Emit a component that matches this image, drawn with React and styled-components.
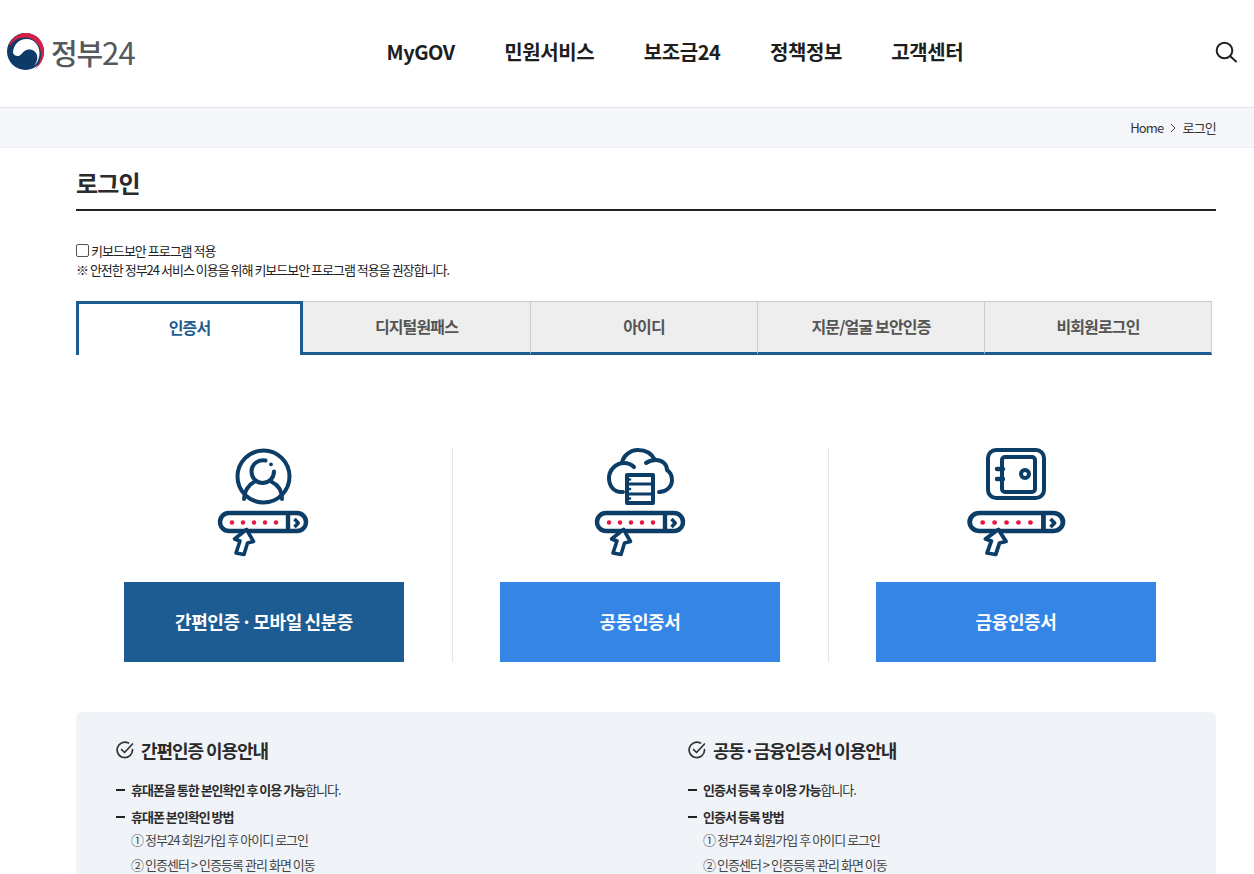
import React from "react";
import styled, { createGlobalStyle } from "styled-components";

const Global = createGlobalStyle`
  html, body { margin: 0; padding: 0; height: 874px; overflow: hidden; background: #fff; }
  body { font-family: "Noto Sans CJK KR", "Noto Sans", sans-serif; color: #222; }
  * { box-sizing: border-box; }
`;

const Header = styled.header`
  height: 108px;
  border-bottom: 1px solid #e3e5ea;
  display: grid;
  grid-template-columns: 340px 1fr 60px;
  align-items: center;
  padding: 0 17px 4px 7px;
`;
const Logo = styled.a`
  display: flex;
  align-items: center;
  gap: 7px;
  height: 37px;
`;
const LogoText = styled.span`
  font-size: 29px;
  font-weight: 500;
  color: #55585c;
  letter-spacing: -1.2px;
  line-height: 36px;
`;
const LogoDigits = styled.span`
  font-size: 31px;
  font-weight: 400;
  letter-spacing: -0.6px;
`;
const Nav = styled.nav`
  display: flex;
  gap: 49.5px;
  margin-left: 39.5px;
`;
const NavItem = styled.a`
  font-size: 20px;
  font-weight: 700;
  color: #1e1e1e;
  letter-spacing: -0.42px;
  line-height: 30px;
`;
const SearchBtn = styled.div`
  justify-self: end;
  width: 22px;
  height: 22px;
`;
const Crumbs = styled.div`
  height: 40px;
  background: #f4f6fa;
  border-bottom: 1px solid #eceef2;
  display: flex;
  align-items: center;
  justify-content: flex-end;
  gap: 5.5px;
  padding-right: 38px;
  font-size: 13px;
  letter-spacing: -0.8px;
  color: #333;
`;
const Main = styled.main`
  width: 1140px;
  margin-left: 76px;
`;
const Title = styled.h1`
  margin: 0;
  border-bottom: 2px solid #222;
  font-size: 24px;
  font-weight: 700;
  color: #2b2b2b;
  line-height: 35px;
  padding-top: 17px;
  letter-spacing: -0.8px;
  box-sizing: content-box;
  height: 44px;
`;
const Security = styled.div`
  margin-top: 30px;
  font-size: 13px;
  letter-spacing: -1px;
  line-height: 19px;
  color: #222;
`;
const CheckRow = styled.label`
  display: flex;
  align-items: center;
  gap: 2px;
`;
const Check = styled.input`
  width: 13px;
  height: 13px;
  margin: 0;
  appearance: none;
  border: 1px solid #555;
  border-radius: 2px;
  background: #fff;
`;
const Tabs = styled.div`
  margin-top: 22px;
  display: grid;
  grid-template-columns: 227px 228px repeat(3, 227px);
  height: 54px;
`;
const Tab = styled.div`
  display: flex;
  align-items: center;
  justify-content: center;
  font-size: 16px;
  font-weight: 700;
  letter-spacing: -0.85px;
  padding-bottom: ${p => (p.$active ? "5px" : "2px")};
  color: ${p => (p.$active ? "#1d5c92" : "#555")};
  background: ${p => (p.$active ? "#fff" : "#eee")};
  border: ${p => (p.$active ? "3px solid #1d5c92" : "1px solid #ccc")};
  border-bottom: ${p => (p.$active ? "0" : "3px solid #1d5c92")};
  border-left-width: ${p => (p.$active ? "3px" : "0")};
`;
const Methods = styled.div`
  margin-top: 93px;
  display: grid;
  grid-template-columns: repeat(3, 376px);
`;
const Method = styled.div`
  height: 214px;
  display: flex;
  flex-direction: column;
  align-items: center;
  justify-content: space-between;
  border-left: ${p => (p.$divider ? "1px solid #e6e6e6" : "0")};
  padding-right: ${p => (p.$divider ? "1px" : "0")};
`;
const MethodIcon = styled.svg`
  width: 100px;
  height: 112px;
  display: block;
`;
const MethodButton = styled.a`
  width: 280px;
  height: 80px;
  display: flex;
  align-items: center;
  justify-content: center;
  padding-bottom: 2px;
  color: #fff;
  font-size: 18px;
  font-weight: 700;
  letter-spacing: -0.4px;
  word-spacing: -1px;
  white-space: pre;
  background: ${p => (p.$dark ? "#1d5c92" : "#3485e6")};
`;
const Dot = styled.span`
  word-spacing: ${p => p.$gap}px;
`;
const Info = styled.section`
  margin-top: 50px;
  background: #f0f4f9;
  border-radius: 6px;
  height: 300px;
  padding: 25px 40px;
  display: grid;
  grid-template-columns: 572px 1fr;
`;
const InfoTitle = styled.h2`
  margin: 0 0 17px;
  display: flex;
  align-items: center;
  gap: 7px;
  font-size: 18px;
  font-weight: 700;
  color: #2b2b2b;
  letter-spacing: -1.05px;
  line-height: 26px;
  white-space: pre;
`;
const InfoItem = styled.div`
  position: relative;
  padding-left: 15px;
  font-size: 13px;
  letter-spacing: -1px;
  line-height: 20px;
  margin-bottom: ${p => (p.$tight ? "0" : "7px")};
  color: #333;
  &::before {
    content: "";
    position: absolute;
    left: 0;
    top: 9px;
    width: 9px;
    height: 2px;
    background: #222;
  }
`;
const Strong = styled.strong`
  font-weight: 700;
  color: #2b2b2b;
`;
const SubLine = styled.div`
  padding-left: 15px;
  font-size: 13px;
  letter-spacing: -0.97px;
  line-height: 25px;
  color: #444;
`;

const NAVY = "#0b3d66";
const Bar = ({ transform }) => (
  <g fill="none" stroke={NAVY} strokeWidth="4.400" transform={transform}>
    <rect x="2" y="65" width="86" height="18" rx="9" fill="#fff" />
    <path d="M70 65v18" />
    <path d="M76.500 71l3.800 4-3.800 4" strokeWidth="3.400" strokeLinejoin="round" />
    <g fill="#e5153f" stroke="none">
      <circle cx="14" cy="74.500" r="2.200" />
      <circle cx="25" cy="74.500" r="2.200" />
      <circle cx="36" cy="74.500" r="2.200" />
      <circle cx="47" cy="74.500" r="2.200" />
      <circle cx="58" cy="74.500" r="2.200" />
    </g>
    <path d="M28.500 81.500L16.500 91l5.500 2-4 12 8 1.500 3.500-11.500 6-1.500z" fill="#fff" strokeLinejoin="round" strokeWidth="3.600" />
  </g>
);

const Person = () => (
  <MethodIcon viewBox="0 0 100 112">
    <g transform="translate(4 0)">
      <g fill="none" stroke={NAVY} strokeWidth="4" strokeLinecap="round">
        <circle cx="45.500" cy="28.500" r="26" />
        <path d="M47.500 12.500C40 11 33.500 16.500 33.500 23.500c0 6.500 5 11.500 11 11.500 6.500 0 11.500-5 11.500-11.500" />
        <path d="M36 34c-6 3-10 10-10 17M54 34c6 3 10 9 10 17" />
      </g>
      <circle cx="53" cy="16.300" r="1.900" fill={NAVY} />
      <Bar />
    </g>
  </MethodIcon>
);
const Cloud = () => (
  <MethodIcon viewBox="0 0 100 112">
    <g transform="translate(4 0)">
      <g fill="none" stroke={NAVY} strokeWidth="4" strokeLinecap="round" strokeLinejoin="round">
        <path d="M29 44h-2c-7 0-12-6-12-14 0-8 7-15 15-15 4 0 8 2 10 4" />
        <path d="M28 15c1-7 8-13 16-13 8 0 14 4 17 10" />
        <path d="M52 15c3-2 6-3 10-3 7 0 11 5 11 10 3 2 5 6 5 10 0 7-6 12-13 12" />
        <rect x="33" y="27" width="26" height="28" fill="#fff" />
        <path d="M33 36h26M33 46h26" strokeWidth="3.200" />
        <path d="M33 31.500h3M33 41h3M33 50.500h3" strokeWidth="2.600" />
      </g>
      <Bar transform="translate(1 0)" />
    </g>
  </MethodIcon>
);
const Safe = () => (
  <MethodIcon viewBox="0 0 100 112">
    <g fill="none" stroke={NAVY} strokeWidth="4" strokeLinecap="round" strokeLinejoin="round">
      <rect x="22" y="2" width="56" height="48" rx="8" />
      <rect x="36" y="9" width="33" height="35" rx="3" />
      <path d="M31 21h6M31 31h6" strokeWidth="4.400" />
      <circle cx="59" cy="26" r="4" />
    </g>
    <Bar transform="translate(1.500 0) scale(1.085 1)" />
  </MethodIcon>
);

const CheckCircle = () => (
  <svg width="18" height="18" viewBox="0 0 18 18" fill="none" stroke="#333" strokeWidth="1.700" strokeLinecap="round" strokeLinejoin="round">
    <path d="M16.500 8.500A7.700 7.700 0 1 1 12.500 2.100" />
    <path d="M5.500 8.500l3 3 8-8.500" />
  </svg>
);

const Guide = ({ title, first, firstRest, second }) => (
  <div>
    <InfoTitle><CheckCircle /><span>{title}</span></InfoTitle>
    <InfoItem><Strong>{first}</Strong>{firstRest}</InfoItem>
    <InfoItem $tight><Strong>{second}</Strong></InfoItem>
    <SubLine>① 정부24 회원가입 후 아이디 로그인</SubLine>
    <SubLine>② 인증센터 &gt; 인증등록 관리 화면 이동</SubLine>
  </div>
);

export default function App() {
  return (
    <>
      <Global />
      <Header>
        <Logo>
          <svg width="37" height="37" viewBox="0 0 37 37">
            <circle cx="18.500" cy="18.500" r="18.500" fill="#0f3a68" />
            <path d="M6 20C6 12 12 6 19.500 6 27 6 32.500 12 32.500 20c0 5-2 10-5.500 13 3-4 4-8 3-11-1.500-4.500-5.500-6-9-5.500-5 1-6 5.500-9.500 6.500C9 23.500 7 22 6 20z" fill="#fff" />
            <path d="M2 12C5 5 11 0 18.500 0 29 0 37 8 37 18.500c0 7.500-4 14.500-9 17.500 4-4 6-10 6-15 0-9-7-16.500-16-16.500-7 0-12 3.500-14.500 8z" fill="#d61f45" />
          </svg>
          <LogoText>정부<LogoDigits>24</LogoDigits></LogoText>
        </Logo>
        <Nav>
          <NavItem>MyGOV</NavItem>
          <NavItem>민원서비스</NavItem>
          <NavItem>보조금24</NavItem>
          <NavItem>정책정보</NavItem>
          <NavItem>고객센터</NavItem>
        </Nav>
        <SearchBtn>
          <svg width="22" height="22" viewBox="0 0 22 22" fill="none" stroke="#222" strokeWidth="2" strokeLinecap="round">
            <circle cx="9.500" cy="9.500" r="7.800" />
            <path d="M15.300 15.300L21 20.500" />
          </svg>
        </SearchBtn>
      </Header>
      <Crumbs>
        <span>Home</span>
        <svg width="8" height="10" viewBox="0 0 8 10" fill="none" stroke="#444" strokeWidth="1"><path d="M2 1l4 4-4 4" /></svg>
        <span>로그인</span>
      </Crumbs>
      <Main>
        <Title>로그인</Title>
        <Security>
          <CheckRow><Check type="checkbox" readOnly />키보드보안 프로그램 적용</CheckRow>
          <div>※ 안전한 정부24 서비스 이용을 위해 키보드보안 프로그램 적용을 권장합니다.</div>
        </Security>
        <Tabs>
          <Tab $active>인증서</Tab>
          <Tab>디지털원패스</Tab>
          <Tab>아이디</Tab>
          <Tab>지문/얼굴 보안인증</Tab>
          <Tab>비회원로그인</Tab>
        </Tabs>
        <Methods>
          <Method>
            <Person />
            <MethodButton $dark>간편인증<Dot $gap={-2}> · </Dot>모바일 신분증</MethodButton>
          </Method>
          <Method $divider>
            <Cloud />
            <MethodButton>공동인증서</MethodButton>
          </Method>
          <Method $divider>
            <Safe />
            <MethodButton>금융인증서</MethodButton>
          </Method>
        </Methods>
        <Info>
          <Guide title="간편인증 이용안내" first="휴대폰을 통한 본인확인 후 이용 가능" firstRest="합니다." second="휴대폰 본인확인 방법" />
          <Guide title={<>공동<Dot $gap={-3}> · </Dot>금융인증서 이용안내</>} first="인증서 등록 후 이용 가능" firstRest="합니다." second="인증서 등록 방법" />
        </Info>
      </Main>
    </>
  );
}
